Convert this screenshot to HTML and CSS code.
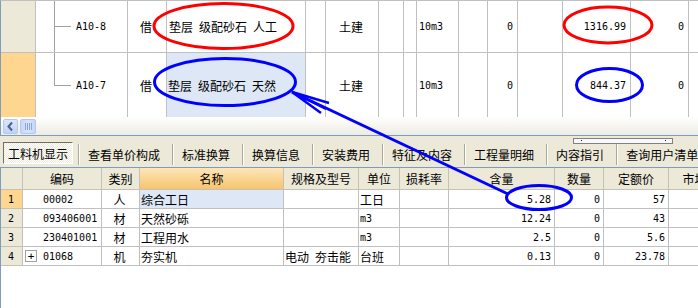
FILE: index.html
```html
<!DOCTYPE html>
<html lang="zh">

<head>
    <meta charset="UTF-8">
    <title>工料机显示</title>
    <link rel="stylesheet" href="styles.css">
</head>

<body>
    <div class="screen">

        <!-- upper grid: quota items -->
        <div class="top-grid">
            <div class="c sel"></div>
            <div class="c code"><span class="tree mid"></span><span class="n">A10-8</span></div>
            <div class="c center">借</div>
            <div class="c">垫层&ensp;级配砂石&ensp;人工</div>
            <div class="c"></div>
            <div class="c center">土建</div>
            <div class="c"></div>
            <div class="c"></div>
            <div class="c n">10m3</div>
            <div class="c"></div>
            <div class="c n right">0</div>
            <div class="c"></div>
            <div class="c n right">1316.99</div>
            <div class="c n right">0</div>
            <div class="c last"></div>

            <div class="c sel current"></div>
            <div class="c code"><span class="tree end"></span><span class="n">A10-7</span></div>
            <div class="c center">借</div>
            <div class="c focus">垫层&ensp;级配砂石&ensp;天然</div>
            <div class="c"></div>
            <div class="c center">土建</div>
            <div class="c"></div>
            <div class="c"></div>
            <div class="c n">10m3</div>
            <div class="c"></div>
            <div class="c n right">0</div>
            <div class="c"></div>
            <div class="c n right">844.37</div>
            <div class="c n right">0</div>
            <div class="c last"></div>
        </div>

        <div class="hscroll">
            <span class="sb-btn">
                <svg width="15" height="15" viewBox="0 0 15 15">
                    <path d="M9 3.5 L5.5 7.5 L9 11.5" fill="none" stroke="#4d6185" stroke-width="2" />
                </svg>
            </span>
            <span class="sb-thumb"><i></i><i></i><i></i><i></i></span>
        </div>

        <!-- tab strip -->
        <div class="tabs">
            <span class="tab active">工料机显示</span>
            <span class="tab">查看单价构成</span>
            <span class="tab">标准换算</span>
            <span class="tab">换算信息</span>
            <span class="tab">安装费用</span>
            <span class="tab">特征及内容</span>
            <span class="tab">工程量明细</span>
            <span class="tab">内容指引</span>
            <span class="tab">查询用户清单</span>
            <div class="mini-scroll"><i></i><i></i></div>
        </div>

        <!-- lower grid: labour / material / machine -->
        <div class="res-grid">
            <div class="h"></div>
            <div class="h">编码</div>
            <div class="h">类别</div>
            <div class="h sorted">名称</div>
            <div class="h">规格及型号</div>
            <div class="h">单位</div>
            <div class="h">损耗率</div>
            <div class="h">含量</div>
            <div class="h">数量</div>
            <div class="h">定额价</div>
            <div class="h">市场价</div>

            <div class="d no current">1</div>
            <div class="d n pad">00002</div>
            <div class="d center">人</div>
            <div class="d focus">综合工日</div>
            <div class="d"></div>
            <div class="d">工日</div>
            <div class="d"></div>
            <div class="d n right">5.28</div>
            <div class="d n right">0</div>
            <div class="d n right">57</div>
            <div class="d"></div>

            <div class="d no">2</div>
            <div class="d n pad">093406001</div>
            <div class="d center">材</div>
            <div class="d">天然砂砾</div>
            <div class="d"></div>
            <div class="d n">m3</div>
            <div class="d"></div>
            <div class="d n right">12.24</div>
            <div class="d n right">0</div>
            <div class="d n right">43</div>
            <div class="d"></div>

            <div class="d no">3</div>
            <div class="d n pad">230401001</div>
            <div class="d center">材</div>
            <div class="d">工程用水</div>
            <div class="d"></div>
            <div class="d n">m3</div>
            <div class="d"></div>
            <div class="d n right">2.5</div>
            <div class="d n right">0</div>
            <div class="d n right">5.6</div>
            <div class="d"></div>

            <div class="d no">4</div>
            <div class="d n"><span class="expand">+</span>01068</div>
            <div class="d center">机</div>
            <div class="d">夯实机</div>
            <div class="d">电动&ensp;夯击能</div>
            <div class="d">台班</div>
            <div class="d"></div>
            <div class="d n right">0.13</div>
            <div class="d n right">0</div>
            <div class="d n right">23.78</div>
            <div class="d"></div>
        </div>

        <!-- hand-drawn marks on top of the screenshot -->
        <svg class="marks" width="698" height="308" viewBox="0 0 698 308">
            <ellipse cx="223.5" cy="26" rx="69.5" ry="22.5" fill="none" stroke="#ff0000" stroke-width="3" />
            <ellipse cx="608" cy="25" rx="44" ry="18" fill="none" stroke="#ff0000" stroke-width="3" />
            <ellipse cx="225" cy="82" rx="70.5" ry="23.5" fill="none" stroke="#0000ff" stroke-width="3" />
            <ellipse cx="609.5" cy="85" rx="33" ry="16.5" fill="none" stroke="#0000ff" stroke-width="3" />
            <ellipse cx="539" cy="197.5" rx="32.5" ry="12" fill="none" stroke="#0000ff" stroke-width="3" />
            <line x1="292" y1="92" x2="508" y2="194" stroke="#0000ff" stroke-width="3" />
            <path d="M292 92 L329 103 M292 92 L326 109 M292 92 L321 113" fill="none" stroke="#0000ff" stroke-width="2.5" />
        </svg>
    </div>
</body>

</html>
```

FILE: styles.css
```css
/* page */
body {
    margin: 0;
    background: #fff;
    font-family: "Noto Sans CJK SC", sans-serif;
    font-size: 12px;
    color: #000;
    overflow: hidden;
}

.screen {
    position: relative;
    width: 698px;
    height: 308px;
    overflow: hidden;
}

.n {
    font-family: "DejaVu Sans Mono", "Noto Sans CJK SC", monospace;
    font-size: 10px;
}

.center {
    justify-content: center;
}

.right {
    justify-content: flex-end;
}

/* upper grid */
.top-grid {
    display: grid;
    grid-template-columns: 35px 92px 39px 139px 20px 53px 25px 13px 42px 29px 30px 45px 68px 58px 60px;
    grid-template-rows: 52px 64px;
    border-top: 1px solid #c0c0c0;
    border-left: 1px solid #7f9db9;
    width: 800px;
}

.top-grid .c {
    display: flex;
    align-items: center;
    white-space: nowrap;
    border-right: 1px solid #c0c0c0;
    padding: 0 4px 0 2px;
    box-sizing: border-box;
}

.top-grid .c:nth-child(-n+15) {
    border-bottom: 1px solid #c0c0c0;
}

.top-grid .c.sel {
    background: #ece9d8;
}

.top-grid .c.sel.current {
    background: #ffd68f;
}

.top-grid .c.focus {
    background: #dde7f5;
    padding-left: 1px;
}

.top-grid .c.code {
    padding-left: 18px;
    align-items: stretch;
}

.top-grid .c.code .n {
    align-self: center;
    margin-left: 5px;
}

.tree {
    width: 17px;
    background-repeat: no-repeat;
}

.tree.mid {
    background-image: linear-gradient(#a0a0a0, #a0a0a0), linear-gradient(#a0a0a0, #a0a0a0);
    background-size: 1px 100%, 100% 1px;
    background-position: 0 0, 0 25px;
}

.tree.end {
    background-image: linear-gradient(#a0a0a0, #a0a0a0), linear-gradient(#a0a0a0, #a0a0a0);
    background-size: 1px 33px, 100% 1px;
    background-position: 0 0, 0 32px;
}

/* horizontal scroll bar */
.hscroll {
    display: flex;
    align-items: center;
    gap: 2px;
    height: 18px;
    padding-left: 2px;
    border-left: 1px solid #7f9db9;
    border-bottom: 1px solid #7f9db9;
    background: linear-gradient(#ffffff, #f6f5f0 50%, #ecebe4);
}

.sb-btn {
    display: flex;
    width: 15px;
    height: 15px;
    box-sizing: border-box;
    border: 1px solid #b5c7ef;
    border-radius: 2px;
    background: linear-gradient(#dbe6fc, #c0d2f8);
}

.sb-btn svg {
    margin: -1px;
}

.sb-thumb {
    display: flex;
    justify-content: center;
    align-items: center;
    gap: 1px;
    width: 16px;
    height: 15px;
    box-sizing: border-box;
    border: 1px solid #b5c7ef;
    border-radius: 2px;
    background: linear-gradient(90deg, #c7d6f9, #d8e3fc 50%, #c7d6f9);
}

.sb-thumb i {
    width: 1px;
    height: 7px;
    background: #8ca4dc;
}

/* tabs */
.tabs {
    position: relative;
    display: flex;
    align-items: flex-end;
    height: 31px;
    padding: 0 0 2px 3px;
    box-sizing: border-box;
    background: #ece9d8;
    white-space: nowrap;
}

.tab {
    display: flex;
    align-items: center;
    height: 21px;
    padding: 0 12px 0 9px;
    border-left: 1px solid #aca899;
    box-shadow: inset 1px 0 0 #fff;
}

.tab.active {
    height: 20px;
    margin: 0 5px 1px 0;
    padding: 0 4px;
    border: 1px solid;
    border-color: #716f64 #fff #fff #716f64;
    box-shadow: none;
    background: repeating-conic-gradient(#ffffff 0 25%, #ece9d8 0 50%) 0 0 / 2px 2px;
}

.mini-scroll {
    position: absolute;
    left: 573px;
    top: 2px;
    width: 100px;
    height: 6px;
    box-sizing: border-box;
    border: 1px solid #808080;
    background: #f8f8f4;
}

.mini-scroll i {
    position: absolute;
    top: 1px;
    width: 1px;
    height: 1px;
    background: #0000c0;
}

.mini-scroll i:first-child {
    left: 7px;
}

.mini-scroll i:last-child {
    left: 91px;
}

/* lower grid */
.res-grid {
    display: grid;
    grid-template-columns: 22px 79px 38px 144px 75px 41px 49px 106px 49px 65px 64px;
    grid-template-rows: 22px repeat(4, 19px);
    width: 800px;
    height: 141px;
    align-content: start;
    border-top: 1px solid #7f9db9;
    border-left: 1px solid #7f9db9;
}

.res-grid .h,
.res-grid .d {
    display: flex;
    align-items: center;
    white-space: nowrap;
    box-sizing: border-box;
    border-right: 1px solid #c0c0c0;
    border-bottom: 1px solid #c0c0c0;
}

.res-grid .h {
    justify-content: center;
    background: #ece9d8;
    border-color: #c5c2b2;
}

.res-grid .h.sorted {
    background: linear-gradient(#fde6b8, #f6c46f);
}

.res-grid .d {
    padding: 0 3px 0 1px;
}

.res-grid .d.pad {
    padding-left: 20px;
}

.res-grid .d.no {
    justify-content: center;
    padding-right: 2px;
    background: #ece9d8;
    border-color: #c5c2b2;
    font-family: "DejaVu Sans Mono", monospace;
    font-size: 10px;
}

.res-grid .d.no.current {
    background: #ffd68f;
}

.res-grid .d.focus {
    background: #dde7f5;
}

.expand {
    display: inline-flex;
    align-items: center;
    justify-content: center;
    width: 12px;
    height: 12px;
    margin: 0 6px 0 1px;
    box-sizing: border-box;
    border: 1px solid #a0a0a0;
    background: #fff;
    font-size: 11px;
    line-height: 1;
}

/* annotation layer */
.marks {
    position: absolute;
    left: 0;
    top: 0;
    pointer-events: none;
}
```
